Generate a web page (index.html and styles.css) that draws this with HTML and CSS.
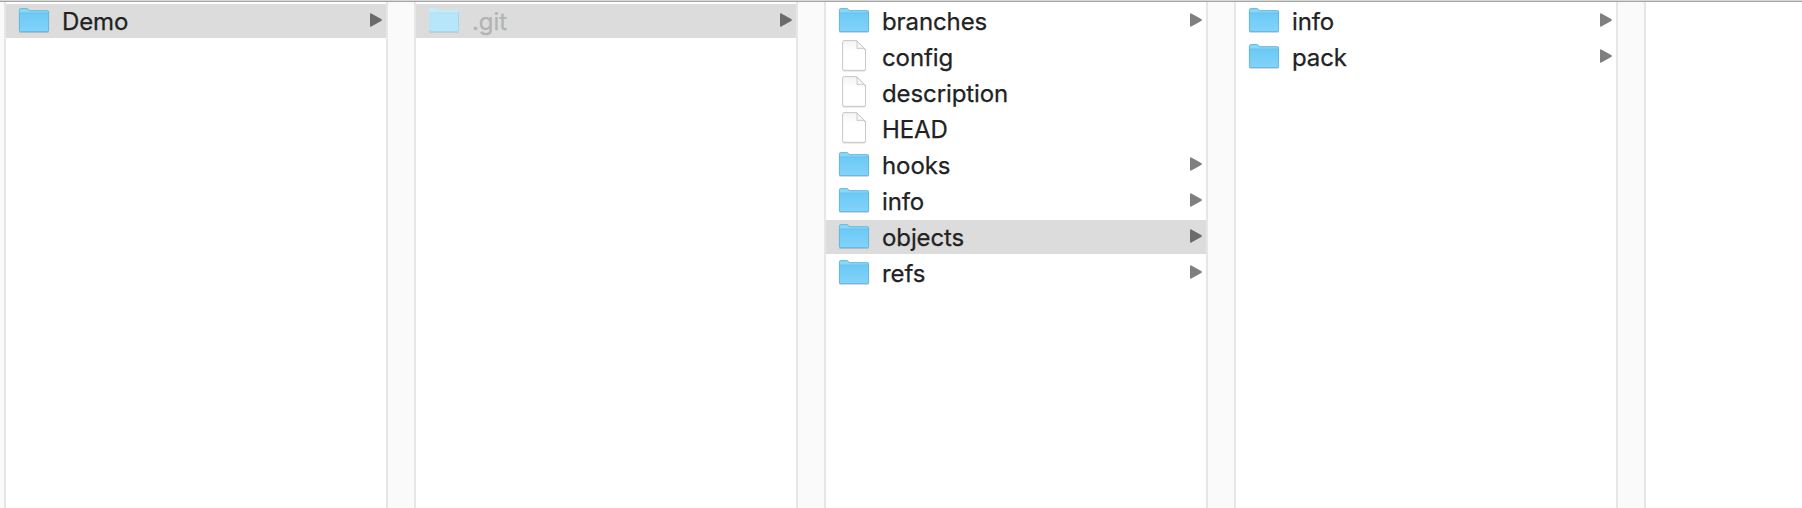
FILE: index.html
```
<!DOCTYPE html>
<html lang="en">
<head>
<meta charset="utf-8">
<title>Demo</title>
<link rel="stylesheet" href="styles.css">
</head>
<body>
<svg class="defs" width="0" height="0" aria-hidden="true">
  <defs>
    <linearGradient id="front" x1="0" y1="0" x2="0" y2="1"><stop offset="0" stop-color="#6ccaf6"/><stop offset="1" stop-color="#83d3fa"/></linearGradient>
    <linearGradient id="paper" x1="0" y1="0" x2="0" y2="1"><stop offset="0" stop-color="#f4f4f4"/><stop offset=".35" stop-color="#fff"/></linearGradient>
    <symbol id="folder" viewBox="0 0 32 36">
      <path d="M1 26V31.5Q1 33 2.5 33H29.5Q31 33 31 31.5V26Z" fill="#000" opacity=".14"/>
      <path d="M1 10Q1 8.2 2.8 8.2H8.8Q9.8 8.2 10.5 9L11.5 10.3H29.5Q31 10.3 31 11.8V30.5Q31 32 29.5 32H2.5Q1 32 1 30.5Z" fill="#87d9f9"/>
      <path d="M1 13.3H31V30.5Q31 32 29.5 32H2.5Q1 32 1 30.5Z" fill="url(#front)"/>
      <path d="M1.5 13H30.5" stroke="#66b9df" stroke-width=".8"/>
      <path d="M1.4 10.4Q1.4 8.6 3 8.6H8.8Q9.6 8.6 10.2 9.3L11.3 10.7H29.3Q30.6 10.7 30.6 12V30.2Q30.6 31.6 29.3 31.6H2.7Q1.4 31.6 1.4 30.2Z" fill="none" stroke="#5fb0d6" stroke-width=".8"/>
    </symbol>
    <symbol id="folder-dim" viewBox="0 0 32 36">
      <path d="M1 26V31.5Q1 33 2.5 33H29.5Q31 33 31 31.5V26Z" fill="#000" opacity=".08"/>
      <path d="M1 10Q1 8.2 2.8 8.2H8.8Q9.8 8.2 10.5 9L11.5 10.3H29.5Q31 10.3 31 11.8V30.5Q31 32 29.5 32H2.5Q1 32 1 30.5Z" fill="#c2ebfb"/>
      <path d="M1 13.3H31V30.5Q31 32 29.5 32H2.5Q1 32 1 30.5Z" fill="#b7e6fb"/>
      <path d="M1.5 13H30.5" stroke="#acdcf0" stroke-width=".8"/>
      <path d="M1.4 31V30.2Q1.4 31.6 2.7 31.6H29.3Q30.6 31.6 30.6 30.2V12" fill="none" stroke="#a3cfe2" stroke-width=".8"/>
    </symbol>
    <symbol id="file" viewBox="0 0 32 36">
      <path d="M4.8 33V33.6Q4.8 35 6.2 35H26Q27.4 35 27.4 33.6V33" fill="none" stroke="#000" opacity=".16"/>
      <path d="M6.2 4.6H18.4L27.5 13.6V32.6Q27.5 34.3 26 34.3H6.2Q4.6 34.3 4.6 32.7V6.2Q4.6 4.6 6.2 4.6Z" fill="url(#paper)" stroke="#c2c2c2" stroke-width=".9"/>
      <path d="M18.6 4.8C19.5 7 19 9.5 19 12.5C22 12.3 25.5 12 27.5 13.6Z" fill="#f7f7f7" stroke="#c2c2c2" stroke-width=".9"/>
    </symbol>
    <symbol id="arrow" viewBox="0 0 12 14">
      <path d="M0 1.2Q0 -.2 1.3 .4L11.2 6.1Q12.5 7 11.2 7.9L1.3 13.6Q0 14.2 0 12.8Z" fill="currentColor"/>
    </symbol>
  </defs>
</svg>
<main class="browser">
  <section class="column">
    <div class="row selected"><svg class="icon"><use href="#folder"/></svg><span class="name">Demo</span><svg class="arrow"><use href="#arrow"/></svg></div>
  </section>
  <section class="column">
    <div class="row selected hidden-item"><svg class="icon"><use href="#folder-dim"/></svg><span class="name">.git</span><svg class="arrow"><use href="#arrow"/></svg></div>
  </section>
  <section class="column">
    <div class="row"><svg class="icon"><use href="#folder"/></svg><span class="name">branches</span><svg class="arrow"><use href="#arrow"/></svg></div>
    <div class="row"><svg class="icon"><use href="#file"/></svg><span class="name">config</span></div>
    <div class="row"><svg class="icon"><use href="#file"/></svg><span class="name">description</span></div>
    <div class="row"><svg class="icon"><use href="#file"/></svg><span class="name">HEAD</span></div>
    <div class="row"><svg class="icon"><use href="#folder"/></svg><span class="name">hooks</span><svg class="arrow"><use href="#arrow"/></svg></div>
    <div class="row"><svg class="icon"><use href="#folder"/></svg><span class="name">info</span><svg class="arrow"><use href="#arrow"/></svg></div>
    <div class="row selected"><svg class="icon"><use href="#folder"/></svg><span class="name">objects</span><svg class="arrow"><use href="#arrow"/></svg></div>
    <div class="row"><svg class="icon"><use href="#folder"/></svg><span class="name">refs</span><svg class="arrow"><use href="#arrow"/></svg></div>
  </section>
  <section class="column">
    <div class="row"><svg class="icon"><use href="#folder"/></svg><span class="name">info</span><svg class="arrow"><use href="#arrow"/></svg></div>
    <div class="row"><svg class="icon"><use href="#folder"/></svg><span class="name">pack</span><svg class="arrow"><use href="#arrow"/></svg></div>
  </section>
  <section class="column"></section>
</main>
</body>
</html>
```
FILE: styles.css
```
* { box-sizing: border-box; }
body {
  margin: 0;
  background: #fff;
  overflow: hidden;
  font-family: Inter, "Liberation Sans", sans-serif;
}
.defs { display: block; }
.browser {
  display: flex;
  gap: 26px;
  height: 508px;
  padding-left: 4px;
  overflow: hidden;
  background: #fafafa;
  border-top: 1px solid #d8d8d8;
  box-shadow: inset 0 1px #a6a6a6;
}
.column {
  display: flex;
  flex: 0 0 384px;
  flex-direction: column;
  gap: 2px;
  margin-top: 1px;
  padding-top: 2px;
  background: #fff;
  border: solid #e6e6e6;
  border-width: 0 2px;
}
.row {
  display: flex;
  align-items: flex-start;
  height: 34px;
  padding: 0 4px 0 12px;
  color: #222;
}
.selected { background: #dcdcdc; }
.icon {
  width: 32px;
  height: 36px;
  margin-top: -4px;
}
.name {
  flex: 1;
  margin-left: 12px;
  padding-top: 1px;
  font-size: 24px;
  line-height: 34px;
  letter-spacing: -0.1px;
  -webkit-text-stroke: 0.25px currentColor;
}
.arrow {
  width: 12px;
  height: 14px;
  margin-top: 9px;
  color: #7f7f7f;
}
.selected .arrow { color: #6b6b6b; }
.hidden-item .name { color: #b3b3b3; }
```
